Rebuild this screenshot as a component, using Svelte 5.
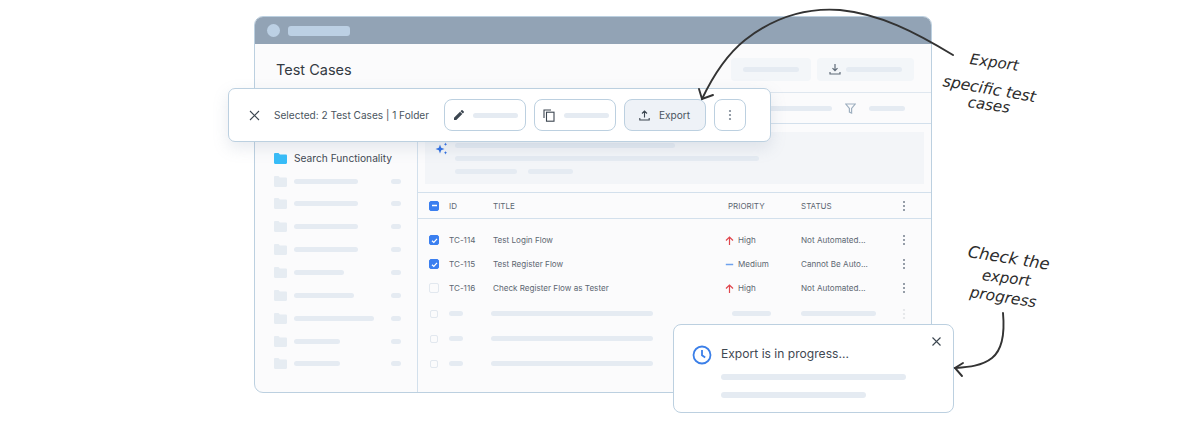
<script lang="ts">
	const folders = [64, 64, 64, 64, 50, 60, 80, 46, 46];
	const cases = [
		{ id: 'TC-114', title: 'Test Login Flow', priority: 'High', status: 'Not Automated...', checked: true },
		{ id: 'TC-115', title: 'Test Register Flow', priority: 'Medium', status: 'Cannot Be Auto...', checked: true },
		{ id: 'TC-116', title: 'Check Register Flow as Tester', priority: 'High', status: 'Not Automated...', checked: false }
	];
</script>

{#snippet dots()}
	<svg class="dots" width="4" height="12" viewBox="0 0 4 12"><circle cx="2" cy="2" r="1.1" /><circle cx="2" cy="6" r="1.1" /><circle cx="2" cy="10" r="1.1" /></svg>
{/snippet}

{#snippet folder(color)}
	<svg class="folder" width="13" height="11" viewBox="0 0 13 11"><path d="M0 1.2C0 .5.5 0 1.2 0h3.3l1.4 1.6h5.9c.7 0 1.2.5 1.2 1.2v7c0 .7-.5 1.2-1.2 1.2H1.2C.5 11 0 10.500 0 9.800z" fill={color} /></svg>
{/snippet}

<div class="stage">
	<div class="window">
		<div class="titlebar">
			<span class="dot"></span>
			<span class="title-bar"></span>
		</div>
		<header class="head">
			<h1>Test Cases</h1>
			<div class="head-actions">
				<div class="ghost"><span class="bar" style="width:56px"></span></div>
				<div class="ghost">
					<svg width="12" height="12" viewBox="0 0 12 12" fill="none" stroke="#5f6b78" stroke-width="1.2"><path d="M6 1v6.500M3.500 5.200 6 7.700l2.500-2.500M1 9v2h10V9" /></svg>
					<span class="bar" style="width:56px"></span>
				</div>
			</div>
		</header>
		<div class="filters">
			<span class="bar" style="width:70px"></span>
			<svg width="11" height="11" viewBox="0 0 11 11" fill="none" stroke="#9fb0c0" stroke-width="1.2"><path d="M.8 1h9.400L6.600 5.500V10L4.400 9V5.500z" /></svg>
			<span class="bar" style="width:36px"></span>
		</div>
		<div class="body">
			<aside class="sidebar">
				<div class="folder-row"></div>
				<div class="folder-row active">
					{@render folder('#38bdf8')}
					<span>Search Functionality</span>
				</div>
				{#each folders as w}
					<div class="folder-row">
						{@render folder('#e6ecf2')}
						<span class="bar" style="width:{w}px"></span>
						<span class="bar count"></span>
					</div>
				{/each}
			</aside>
			<main class="content">
				<div class="ai-wrap">
					<div class="ai">
						<svg class="spark" width="13" height="13" viewBox="0 0 13 13" fill="#2f6fe4"><path d="M5 2.500 6.200 5.800 9.500 7 6.200 8.200 5 11.500 3.800 8.200.5 7 3.800 5.800z" /><path d="M10.500.5l.5 1.300 1.300.5-1.300.5-.5 1.300L10 2.800l-1.300-.5 1.300-.5zM10.500 9l.5 1.200 1.200.5-1.200.5-.5 1.300-.5-1.300-1.200-.5 1.200-.5z" /></svg>
						<div class="ai-lines">
							<span class="bar" style="width:220px"></span>
							<span class="bar" style="width:304px"></span>
							<div class="ai-last">
								<span class="bar" style="width:62px"></span>
								<span class="bar" style="width:45px"></span>
							</div>
						</div>
					</div>
				</div>
				<div class="grid head-row">
					<span class="box on"><svg width="7" height="7" viewBox="0 0 7 7"><path d="M1 3.500h5" stroke="#fff" stroke-width="1.300" /></svg></span>
					<span>ID</span>
					<span>TITLE</span>
					<span class="pri-head">PRIORITY</span>
					<span>STATUS</span>
					{@render dots()}
				</div>
				<div class="rows">
					{#each cases as c}
						<div class="grid row">
							{#if c.checked}
								<span class="box on"><svg width="7" height="7" viewBox="0 0 7 7" fill="none"><path d="M1 3.800 2.800 5.500 6 1.800" stroke="#fff" stroke-width="1.200" /></svg></span>
							{:else}
								<span class="box"></span>
							{/if}
							<span>{c.id}</span>
							<span>{c.title}</span>
							<span class="pri">
								{#if c.priority === 'High'}
									<svg width="9" height="9" viewBox="0 0 9 9" fill="none" stroke="#e0464d" stroke-width="1.200"><path d="M4.500 9V1M1 4.500 4.500 1 8 4.500" /></svg>
								{:else}
									<svg width="9" height="9" viewBox="0 0 9 9"><path d="M.8 4.500h7.400" stroke="#6ea2ee" stroke-width="1.500" /></svg>
								{/if}
								{c.priority}
							</span>
							<span>{c.status}</span>
							{@render dots()}
						</div>
					{/each}
					{#each [0, 1, 2] as n}
						<div class="grid row skeleton">
							<span class="box small"></span>
							<span class="bar" style="width:14px"></span>
							<span class="bar title-skel"></span>
							<span class="bar pri-skel"></span>
							<span class="bar" style="width:75px"></span>
							{#if n === 0}
								<span class="faint">{@render dots()}</span>
							{/if}
						</div>
					{/each}
				</div>
			</main>
		</div>
	</div>

	<div class="toolbar">
		<svg class="close" width="11" height="11" viewBox="0 0 11 11" stroke="#3c4650" stroke-width="1.100"><path d="M1 1l9 9M10 1l-9 9" /></svg>
		<span class="selected">Selected: 2 Test Cases | 1 Folder</span>
		<div class="tool">
			<svg width="12" height="12" viewBox="0 0 12 12" fill="#3c4650"><path d="M1 8.700V11h2.300l6-6L7 2.700zM10.800 3.500c.3-.3.300-.7 0-1L9.500 1.200c-.3-.3-.7-.3-1 0l-1 1 2.300 2.300z" /></svg>
			<span class="bar" style="width:45px"></span>
		</div>
		<div class="tool">
			<svg width="13" height="13" viewBox="0 0 13 13" fill="none" stroke="#3c4650" stroke-width="1.100"><path d="M1 9V1h7" /><rect x="3.500" y="3.200" width="7.500" height="9" /></svg>
			<span class="bar" style="width:45px"></span>
		</div>
		<div class="tool export">
			<svg width="11" height="11" viewBox="0 0 11 11" fill="none" stroke="#3c4650" stroke-width="1.100"><path d="M5.500 7.500V1M3 3.500 5.500 1 8 3.500M.8 8v2h9.400V8" /></svg>
			<span>Export</span>
		</div>
		<div class="tool more">{@render dots()}</div>
	</div>

	<div class="toast">
		<svg class="clock" width="20" height="20" viewBox="0 0 20 20" fill="none" stroke="#3b7fe8" stroke-width="1.800"><circle cx="10" cy="10" r="8.500" /><path d="M10 5v5.300l3.200 2.200" /></svg>
		<div class="toast-body">
			<p>Export is in progress...</p>
			<span class="bar" style="width:185px"></span>
			<span class="bar" style="width:145px"></span>
		</div>
		<svg class="toast-close" width="9" height="9" viewBox="0 0 9 9" stroke="#3c4650" stroke-width="1.100"><path d="M.5.500l8 8M8.500.500l-8 8" /></svg>
	</div>

	<svg class="arrows" width="1181" height="437" viewBox="0 0 1181 437" fill="none" stroke="#333" stroke-width="1.900" stroke-linecap="round">
		<path d="M953 55C915 32 880 14 840 10C800 7 768 22 745 40C725 56 712 78 702 99" />
		<path d="M699 89 702 99 713 95" />
		<path d="M1003 313C1005 335 1002 350 992 358C982 366 968 367 955 368" />
		<path d="M963 363 955 368 962 376" />
	</svg>

	<div class="note n1">Export</div>
	<div class="note n2">specific test</div>
	<div class="note n3">cases</div>
	<div class="note n4">Check the</div>
	<div class="note n5">export</div>
	<div class="note n6">progress</div>
</div>

<style>
	:global(body) {
		margin: 0;
		background: #fff;
	}
	.stage {
		position: relative;
		width: 1181px;
		height: 437px;
		padding: 16px 0 0 254px;
		box-sizing: border-box;
		overflow: hidden;
		font-family: Inter, 'Liberation Sans', sans-serif;
		color: #4a5560;
	}
	.bar {
		display: block;
		height: 5px;
		border-radius: 3px;
		background: #e5ebf2;
		flex: none;
	}
	.dots {
		fill: #7d8894;
		display: block;
	}
	.window {
		width: 678px;
		height: 377px;
		box-sizing: border-box;
		background: #fbfbfc;
		border: 1px solid #bcd0e0;
		border-radius: 9px;
		overflow: hidden;
		display: flex;
		flex-direction: column;
	}
	.titlebar {
		height: 27px;
		flex: none;
		background: #92a3b5;
		display: flex;
		align-items: center;
		gap: 8px;
		padding-left: 12px;
	}
	.dot {
		width: 13px;
		height: 13px;
		border-radius: 50%;
		background: #bcd0e4;
	}
	.title-bar {
		width: 62px;
		height: 10px;
		border-radius: 3px;
		background: #bcd0e4;
	}
	.head {
		height: 49px;
		flex: none;
		box-sizing: border-box;
		border-bottom: 1px solid #dfe7ef;
		display: flex;
		align-items: center;
		justify-content: space-between;
		padding: 2px 17px 0 21px;
	}
	h1 {
		margin: 0;
		font-size: 14.5px;
		font-weight: 400;
		color: #333a42;
	}
	.head-actions {
		display: flex;
		gap: 6px;
	}
	.ghost {
		height: 23px;
		background: #f3f6f9;
		border-radius: 4px;
		display: flex;
		align-items: center;
		gap: 5px;
		padding: 0 12px;
	}
	.filters {
		height: 31px;
		flex: none;
		box-sizing: border-box;
		border-bottom: 1px solid #d3e0ec;
		display: flex;
		align-items: center;
		justify-content: flex-end;
		gap: 13px;
		padding-right: 26px;
	}
	.body {
		flex: 1;
		display: flex;
		min-height: 0;
	}
	.sidebar {
		flex: none;
		border-right: 1px solid #d3e0ec;
		padding-left: 19px;
		width: 143px;
	}
	.folder-row {
		height: 22.85px;
		display: flex;
		align-items: center;
		gap: 7px;
		position: relative;
	}
	.folder-row.active {
		font-size: 10.200px;
		color: #3f4852;
	}
	.count {
		position: absolute;
		left: 117px;
		width: 10px;
	}
	.content {
		flex: 1;
		min-width: 0;
		display: flex;
		flex-direction: column;
	}
	.ai-wrap {
		height: 69px;
		flex: none;
		box-sizing: border-box;
		padding: 8px 7px;
		border-bottom: 1px solid #d3e0ec;
	}
	.ai {
		height: 52px;
		background: #f3f5f8;
		display: flex;
		position: relative;
		padding-left: 30px;
		padding-top: 11px;
		box-sizing: border-box;
	}
	.spark {
		position: absolute;
		left: 10px;
		top: 10px;
	}
	.ai-lines {
		display: flex;
		flex-direction: column;
		gap: 8px;
	}
	.ai-last {
		display: flex;
		gap: 11px;
	}
	.grid {
		display: grid;
		grid-template-columns: 20px 44px 232px 76px 1fr 4px;
		align-items: center;
		padding: 0 25px 0 11px;
		font-size: 8.100px;
		color: #5d6772;
	}
	.head-row {
		height: 26px;
		flex: none;
		box-sizing: border-box;
		border-bottom: 1px solid #d3e0ec;
		font-size: 8px;
	}
	.pri-head {
		padding-left: 3px;
	}
	.rows {
		padding-top: 9px;
	}
	.row {
		height: 24px;
	}
	.skeleton {
		height: 25px;
		position: relative;
		top: 1px;
	}
	.box {
		width: 10px;
		height: 10px;
		box-sizing: border-box;
		border: 1px solid #e2e8ef;
		border-radius: 2px;
		display: flex;
		align-items: center;
		justify-content: center;
	}
	.box.on {
		background: #3b7ff0;
		border-color: #3b7ff0;
	}
	.box.small {
		width: 8px;
		height: 8px;
		margin-left: 1px;
	}
	.title-skel {
		width: 162px;
		margin-left: -2px;
	}
	.pri-skel {
		width: 39px;
		margin-left: 7px;
	}
	.pri {
		display: flex;
		align-items: center;
		gap: 4px;
	}
	.faint {
		opacity: 0.2;
	}
	.toolbar {
		position: absolute;
		left: 228px;
		top: 88px;
		width: 543px;
		height: 54px;
		box-sizing: border-box;
		background: #fff;
		border: 1px solid #bcd0e0;
		border-radius: 7px;
		box-shadow: 0 6px 16px rgba(120, 140, 165, 0.18);
		display: flex;
		align-items: center;
		padding-left: 20px;
		gap: 8px;
		font-size: 10.100px;
		color: #4a5560;
	}
	.close {
		flex: none;
	}
	.selected {
		margin-left: 6px;
		width: 162px;
		flex: none;
		white-space: nowrap;
	}
	.tool {
		width: 82px;
		height: 32px;
		box-sizing: border-box;
		border: 1px solid #bcd0e0;
		border-radius: 8px;
		flex: none;
		display: flex;
		align-items: center;
		gap: 8px;
		padding-left: 8px;
		background: #fff;
	}
	.tool.export {
		background: #eef2f7;
		padding-left: 14px;
		gap: 9px;
	}
	.tool.more {
		width: 32px;
		padding: 0;
		justify-content: center;
	}
	.toast {
		position: absolute;
		left: 673px;
		top: 324px;
		width: 281px;
		height: 89px;
		box-sizing: border-box;
		background: #fff;
		border: 1px solid #bcd0e0;
		border-radius: 8px;
		display: flex;
		gap: 9px;
		padding: 19px 0 0 18px;
	}
	.clock {
		flex: none;
		margin-top: 1px;
	}
	.toast-body {
		display: flex;
		flex-direction: column;
	}
	.toast-body p {
		margin: 0 0 10px;
		font-size: 12.100px;
		line-height: 20px;
		color: #3f4852;
	}
	.toast-body .bar {
		margin-bottom: 12px;
		height: 6px;
	}
	.toast-close {
		position: absolute;
		right: 12px;
		top: 12px;
	}
	.arrows {
		position: absolute;
		inset: 0;
		pointer-events: none;
	}
	.note {
		position: absolute;
		font-family: 'DejaVu Sans', sans-serif;
		font-style: oblique;
		font-size: 15px;
		line-height: 18px;
		color: #2c2c2c;
		white-space: nowrap;
		transform-origin: left center;
	}
	.n1 { left: 970px; top: 50px; transform: rotate(8deg); }
	.n2 { left: 943px; top: 72px; transform: rotate(10deg); font-size: 15.6px; }
	.n3 { left: 968px; top: 93px; transform: rotate(8deg); }
	.n4 { left: 968px; top: 243px; transform: rotate(9deg); font-size: 16.400px; }
	.n5 { left: 982px; top: 266px; transform: rotate(7deg); }
	.n6 { left: 970px; top: 283px; transform: rotate(9deg); font-size: 15.400px; }
</style>
